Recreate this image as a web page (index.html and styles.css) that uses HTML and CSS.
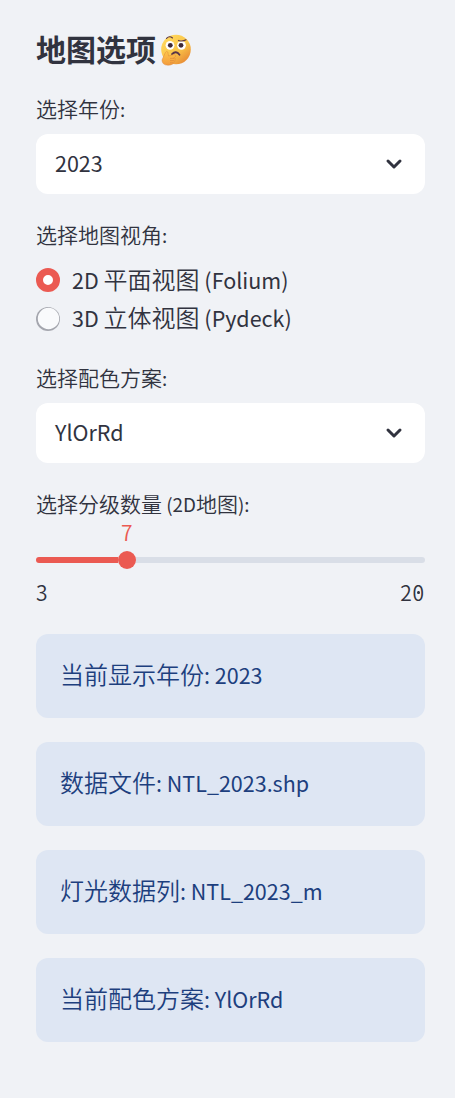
FILE: index.html
```html
<!DOCTYPE html>
<html lang="zh-CN">
<head>
<meta charset="utf-8">
<title>地图选项</title>
<link rel="stylesheet" href="styles.css">
</head>
<body>
<main class="sidebar">
  <h1 class="title"><span>地图选项</span>
    <svg class="thinking" viewBox="0 0 32 32" aria-hidden="true">
      <defs>
        <linearGradient id="face" x1=".2" y1=".1" x2=".85" y2=".9"><stop offset="0" stop-color="#ffd65a"/><stop offset=".55" stop-color="#f9c449"/><stop offset="1" stop-color="#e88b35"/></linearGradient>
        <linearGradient id="hand" x1="0" y1="0" x2="0" y2="1"><stop offset="0" stop-color="#ffc64a"/><stop offset="1" stop-color="#f29b3d"/></linearGradient>
      </defs>
      <circle cx="16" cy="15.5" r="14.8" fill="url(#face)"/>
      <circle cx="10" cy="11.3" r="4.4" fill="#fff"/>
      <circle cx="21.5" cy="11.3" r="4.4" fill="#fff"/>
      <circle cx="10.3" cy="11.3" r="2.4" fill="#3f2837"/>
      <circle cx="21" cy="11.3" r="2.4" fill="#3f2837"/>
      <path d="M6.5 4.3Q9.5 1.3 12.5 4M18.5 6.4Q22.5 7.8 26 5.8" fill="none" stroke="#583447" stroke-width="1.1" stroke-linecap="round"/>
      <path d="M12 20.2Q16 16 19.5 20.8" fill="none" stroke="#583447" stroke-width="1.8" stroke-linecap="round"/>
      <path d="M5.3 18.7Q6.5 16.5 7.8 18L8.5 22L14 20.5Q17 21 15.2 23L13.5 24Q16.5 24 15 26Q15.5 27.5 14 28Q13.5 31 8 31.2Q2 31 2 26Z" fill="url(#hand)" stroke="#dc873a" stroke-width=".5"/>
      <path d="M10 24.4H14M10 26.6H14M10 28.8H13" stroke="#d98335" stroke-width=".6"/>
    </svg>
  </h1>
  <section class="field year">
    <div class="label">选择年份<b>:</b></div>
    <div class="select"><b>2023</b><svg class="chevron" viewBox="0 0 20 20"><path d="M4 7L10 13L16 7"/></svg></div>
  </section>
  <section class="field view">
    <div class="label">选择地图视角<b>:</b></div>
    <div class="option"><i class="radio checked"></i><span><b>2D </b>平面视图<b> (Folium)</b></span></div>
    <div class="option"><i class="radio"></i><span><b>3D </b>立体视图<b> (Pydeck)</b></span></div>
  </section>
  <section class="field palette">
    <div class="label">选择配色方案<b>:</b></div>
    <div class="select"><b>YlOrRd</b><svg class="chevron" viewBox="0 0 20 20"><path d="M4 7L10 13L16 7"/></svg></div>
  </section>
  <section class="field classes">
    <div class="label">选择分级数量<b> (2D</b>地图<b>):</b></div>
    <div class="value">7</div>
    <div class="slider"><div class="filled"></div><div class="thumb"></div><div class="rest"></div></div>
    <div class="limits"><span>3</span><span class="maximum">20</span></div>
  </section>
  <section class="notes">
    <div class="note"><span>当前显示年份<b>: 2023</b></span></div>
    <div class="note"><span>数据文件<b>: NTL_2023.shp</b></span></div>
    <div class="note"><span>灯光数据列<b>: NTL_2023_m</b></span></div>
    <div class="note"><span>当前配色方案<b>: YlOrRd</b></span></div>
  </section>
</main>
</body>
</html>
```

FILE: styles.css
```css
* { box-sizing: border-box; }
body { margin: 0; background: #f0f2f6; color: #31333f; font-family: "Noto Sans CJK SC", sans-serif; font-weight: 350; }
b { font-size: .896em; font-weight: 400; line-height: 1; }
.sidebar { height: 1098px; padding: 28px 30px 0 36px; }
.title { display: flex; align-items: center; gap: 4px; height: 40px; margin: 0; font-size: 30px; line-height: 40px; white-space: nowrap; }
.thinking { width: 32px; height: 32px; margin-top: 4px; }
.label { height: 30px; font-size: 21px; line-height: 30px; white-space: nowrap; }
.year { padding-top: 25px; }
.select { display: flex; align-items: center; justify-content: space-between; height: 60px; margin-top: 11px; padding: 0 21px 0 19px; border-radius: 12px; background: #fff; font-size: 24px; line-height: 36px; }
.select b { padding-bottom: 2px; }
.chevron { width: 20px; height: 20px; fill: none; stroke: #31333f; stroke-width: 3; stroke-linecap: round; stroke-linejoin: round; }
.view { padding-top: 25px; }
.view .label { margin-bottom: 12px; }
.option { display: flex; align-items: center; gap: 12px; height: 38px; font-size: 24px; line-height: 36px; white-space: nowrap; }
.option span { padding-bottom: 2px; }
.radio { width: 24px; height: 24px; flex: none; border-radius: 50%; background: #f9fafc; }
.radio:not(.checked) { margin-top: 2px; box-shadow: inset .5px -.5px 0 1.3px #a4a6ae; }
.radio.checked { border: 7.5px solid #eb5a52; background: #fff; }
.palette { padding-top: 25px; }
.classes { padding-top: 25px; }
.value { height: 28px; padding-left: 85px; color: #eb5a52; font-size: 21px; line-height: 29px; }
.slider { display: flex; align-items: center; height: 18px; margin-top: 5px; }
.filled { width: 82px; height: 6px; border-radius: 3px 0 0 3px; background: #eb5a52; }
.thumb { width: 18px; height: 18px; border-radius: 50%; background: #eb5a52; }
.rest { flex: 1; height: 6px; border-radius: 0 3px 3px 0; background: #d9dee7; }
.limits { display: flex; justify-content: space-between; height: 30px; margin-top: 9px; font-size: 21px; line-height: 29px; }
.maximum { position: relative; letter-spacing: .9px; }
.maximum::after { content: ""; position: absolute; right: 5.5px; top: 13px; width: 2.5px; height: 3px; border-radius: 50%; background: #31333f; }
.notes { display: grid; gap: 24px; padding-top: 26px; }
.note { display: flex; align-items: center; height: 84px; padding: 0 24px 5px; border-radius: 12px; background: #dee6f3; color: #1d3f7e; font-size: 24px; white-space: nowrap; }
```
